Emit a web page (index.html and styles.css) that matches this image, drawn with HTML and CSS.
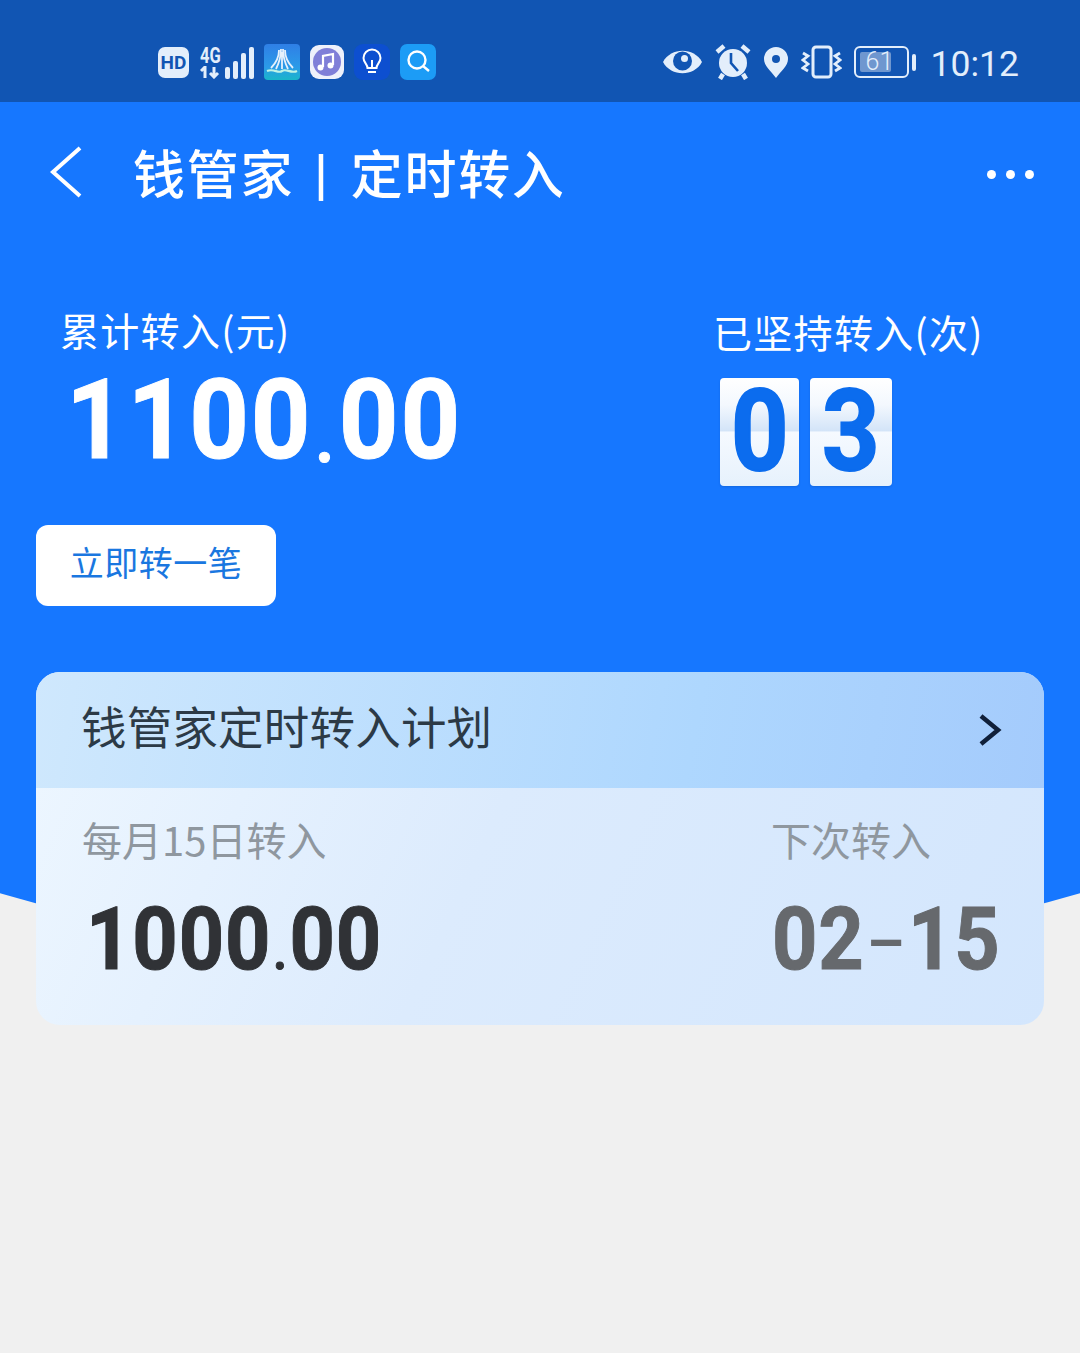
FILE: index.html
```html
<!DOCTYPE html>
<html lang="zh-CN">
    <head>
        <meta charset="UTF-8">
        <title>钱管家 | 定时转入</title>
        <link rel="stylesheet" href="styles.css">
    </head>
    <body>
        <div class="hero_back"></div>
        <div class="page">
            <div class="status_bar">
                <div class="status_left">
                    <span class="hd_badge">HD</span>
                    <div class="signal">
                        <div class="signal_type">
                            <span class="signal_4g">4G</span>
                            <svg class="signal_arrows" width="22" height="13" viewBox="0 0 22 13">
                                <path d="M1 5 L5 1 V12 M14 1 V11 M10 7 L14 11 L18 7" fill="none" stroke="#e3eefb" stroke-width="3"/>
                            </svg>
                        </div>
                        <svg width="29" height="33" viewBox="0 0 29 33">
                            <rect x="0" y="21" width="5" height="12" rx="2" fill="#e3eefb"/>
                            <rect x="8" y="15" width="5" height="18" rx="2" fill="#e3eefb"/>
                            <rect x="16" y="7" width="5" height="26" rx="2" fill="#e3eefb"/>
                            <rect x="24" y="1" width="5" height="32" rx="2" fill="#e3eefb"/>
                        </svg>
                    </div>
                    <svg class="app_icon" width="36" height="36" viewBox="0 0 36 36">
                        <defs>
                            <linearGradient id="tower_bg" x1="0" y1="0" x2="0" y2="1">
                                <stop offset="0" stop-color="#2f7fe6"/>
                                <stop offset="0.65" stop-color="#2b9be8"/>
                                <stop offset="1" stop-color="#19b6c9"/>
                            </linearGradient>
                        </defs>
                        <rect width="36" height="36" rx="4" fill="url(#tower_bg)"/>
                        <path d="M15 6 C15 14 12 19 7 24 M17 5 C17 13 15 19 12 25 M19 5 C19 13 21 19 24 25 M21 6 C21 14 24 19 29 24 M18 8 V25" fill="none" stroke="#e6f1fc" stroke-width="1.800"/>
                        <path d="M3 27 C10 24 14 30 18 27 C22 24 27 30 33 27" fill="none" stroke="#bff3e6" stroke-width="2.200"/>
                    </svg>
                    <svg class="app_icon" width="34" height="34" viewBox="0 0 34 34">
                        <rect width="34" height="34" rx="9" fill="#eef1fb"/>
                        <circle cx="17" cy="17" r="14" fill="#7f7fd8"/>
                        <path d="M13 22 V11 L23 9 V20" fill="none" stroke="#ffffff" stroke-width="2.200"/>
                        <circle cx="10.500" cy="22.500" r="3" fill="#ffffff"/>
                        <circle cx="20.500" cy="20.500" r="3" fill="#ffffff"/>
                    </svg>
                    <svg class="app_icon" width="36" height="36" viewBox="0 0 36 36">
                        <rect width="36" height="36" rx="9" fill="#0d4fd0"/>
                        <path d="M13.500 24 C13.500 20 9.500 18.500 9.500 14 A8.500 8.500 0 0 1 26.500 14 C26.500 18.500 22.500 20 22.500 24 Z" fill="none" stroke="#ffffff" stroke-width="2"/>
                        <path d="M14 28 H22 M18 16 V23" stroke="#ffffff" stroke-width="2"/>
                    </svg>
                    <svg class="app_icon" width="36" height="36" viewBox="0 0 36 36">
                        <rect width="36" height="36" rx="7" fill="#1c9cf6"/>
                        <circle cx="17" cy="16" r="8.500" fill="none" stroke="#ffffff" stroke-width="2.400"/>
                        <path d="M23 22 L29 27" stroke="#ffffff" stroke-width="2.400"/>
                    </svg>
                </div>
                <div class="status_right">
                    <svg width="41" height="28" viewBox="0 0 41 28">
                        <path d="M1 14 C9 -1 32 -1 40 14 C32 29 9 29 1 14 Z" fill="#e3eefb"/>
                        <circle cx="20.500" cy="13" r="9.500" fill="#1155b3"/>
                        <circle cx="22.500" cy="10.500" r="3.500" fill="#e3eefb"/>
                    </svg>
                    <svg width="36" height="36" viewBox="0 0 36 36">
                        <circle cx="18" cy="19" r="14" fill="#e3eefb"/>
                        <path d="M2 8 L9 2 M34 8 L27 2 M8 30 L5 35 M28 30 L31 35" stroke="#e3eefb" stroke-width="4.500"/>
                        <path d="M16 9 V19 L23 27" fill="none" stroke="#1155b3" stroke-width="2.600"/>
                    </svg>
                    <svg width="26" height="32" viewBox="0 0 26 32">
                        <path d="M13 32 C8 25 1 20 1 13 A12 12 0 0 1 25 13 C25 20 18 25 13 32 Z" fill="#e3eefb"/>
                        <circle cx="13" cy="13" r="4" fill="#1155b3"/>
                    </svg>
                    <svg width="41" height="34" viewBox="0 0 41 34">
                        <rect x="12" y="2" width="18" height="30" rx="3" fill="none" stroke="#e3eefb" stroke-width="3"/>
                        <path d="M2 8 L7 11 L2 15 L7 19 L2 23 L7 26 M39 8 L34 11 L39 15 L34 19 L39 23 L34 26" fill="none" stroke="#e3eefb" stroke-width="2.800"/>
                    </svg>
                    <div class="battery">
                        <div class="battery_body">
                            <div class="battery_fill"></div>
                            <span class="battery_level">61</span>
                        </div>
                        <div class="battery_tip"></div>
                    </div>
                    <span class="clock">10:12</span>
                </div>
            </div>

            <div class="nav_bar">
                <svg class="nav_back" width="32" height="52" viewBox="0 0 32 52">
                    <path d="M30 2 L3 26 L30 50" fill="none" stroke="#ffffff" stroke-width="4"/>
                </svg>
                <span class="nav_title">钱管家<span class="nav_sep">|</span>定时转入</span>
                <div class="nav_more"><i></i><i></i><i></i></div>
            </div>

            <div class="summary">
                <div class="summary_total">
                    <div class="summary_label">累计转入(元)</div>
                    <div class="summary_amount">1100<span class="amount_dot">.</span>00</div>
                </div>
                <div class="summary_count">
                    <div class="summary_label">已坚持转入(次)</div>
                    <div class="flip_row">
                        <div class="flip_digit"><span>0</span></div>
                        <div class="flip_digit flip_wide"><span>3</span></div>
                    </div>
                </div>
            </div>

            <button class="transfer_button">立即转一笔</button>

            <div class="plan_card">
                <div class="plan_head">
                    <span class="plan_title">钱管家定时转入计划</span>
                    <svg width="24" height="34" viewBox="0 0 24 34">
                        <path d="M3 3 L20 17 L3 31" fill="none" stroke="#10203a" stroke-width="4.500"/>
                    </svg>
                </div>
                <div class="plan_body">
                    <div class="plan_col">
                        <div class="plan_label">每月15日转入</div>
                        <div class="plan_value">1000<span class="value_dot">.</span>00</div>
                    </div>
                    <div class="plan_col plan_col_next">
                        <div class="plan_label">下次转入</div>
                        <div class="plan_value plan_date">02<span class="date_dash">–</span>15</div>
                    </div>
                </div>
            </div>
        </div>
    </body>
</html>
```

FILE: styles.css
```css
body {
    margin: 0px;
    padding: 0px;
    width: 1080px;
    height: 1353px;
    overflow: hidden;
    position: relative;
    background: #f0f0f0;
    font-family: "Noto Sans CJK SC", "Roboto", sans-serif;
}

/* blue area, its lower edge is a wide arc behind the card */
.hero_back {
    position: absolute;
    top: 0px;
    left: 0px;
    width: 1080px;
    height: 970px;
    background: #1677ff;
    clip-path: circle(1936px at 540px -966px);
}

.page {
    position: relative;
    display: flex;
    flex-direction: column;
}

.status_bar {
    height: 102px;
    padding: 0px 61px 0px 158px;
    background: #1155b3;
    display: flex;
    justify-content: space-between;
    align-items: center;
    box-sizing: border-box;
    color: #e3eefb;
}

.status_left {
    display: flex;
    align-items: center;
    margin-top: 22px;
}
.status_left .app_icon { margin-left: 10px; }

.hd_badge {
    width: 31px;
    height: 31px;
    margin-right: 11px;
    border-radius: 7px;
    background: #e3eefb;
    color: #1155b3;
    font-family: "Roboto", sans-serif;
    font-weight: 700;
    font-size: 19px;
    line-height: 31px;
    text-align: center;
}

.signal {
    display: flex;
    align-items: flex-end;
    gap: 1px;
}

.signal_type {
    width: 24px;
    display: flex;
    flex-direction: column;
}

.signal_4g {
    font-family: "Roboto", sans-serif;
    font-weight: 700;
    font-size: 22px;
    line-height: 20px;
    transform: scaleX(0.75);
    transform-origin: left;
}

.status_right {
    display: flex;
    align-items: center;
    gap: 12px;
    margin-top: 22px;
}

.battery {
    display: flex;
    align-items: center;
    gap: 3px;
}

.battery_body {
    position: relative;
    width: 55px;
    height: 32px;
    border: solid 2px #e3eefb;
    border-radius: 6px;
    box-sizing: border-box;
}

.battery_fill {
    position: absolute;
    top: 4px;
    left: 4px;
    width: 31px;
    height: 20px;
    border-radius: 2px;
    background: #6f97cf;
}

.battery_level {
    position: absolute;
    top: 0px;
    left: 10px;
    font-family: "Roboto", sans-serif;
    font-weight: 300;
    font-size: 25px;
    line-height: 28px;
}

.battery_tip {
    width: 4px;
    height: 17px;
    border-radius: 2px;
    background: #e3eefb;
}

.clock {
    margin: 4px 0px 0px 3px;
    font-family: "Roboto", sans-serif;
    font-weight: 400;
    font-size: 35.500px;
    line-height: 42px;
}

.nav_bar {
    height: 143px;
    padding: 0px 46px 0px 50px;
    display: flex;
    align-items: center;
    color: #ffffff;
    box-sizing: border-box;
}

.nav_back { margin-top: -4px; }

.nav_title {
    margin-left: 51px;
    font-size: 52px;
    font-weight: 500;
    line-height: 60px;
    letter-spacing: 1.700px;
}

.nav_sep {
    margin: 0px 21px 0px 20px;
    font-family: "Roboto", sans-serif;
    font-size: 56px;
    font-weight: 500;
}

.nav_more {
    margin-left: auto;
    margin-top: 2px;
    display: flex;
    gap: 10px;
}
.nav_more i {
    width: 9px;
    height: 9px;
    border-radius: 50%;
    background: #ffffff;
}

.summary {
    height: 280px;
    padding: 59px 0px 0px 60px;
    display: flex;
    color: #ffffff;
    box-sizing: border-box;
}

.summary_total { width: 653px; }

.summary_label {
    font-size: 39px;
    line-height: 50px;
    letter-spacing: 1.300px;
}

.summary_amount {
    margin: 16px 0px 0px 6px;
    font-family: "Roboto", sans-serif;
    font-weight: 700;
    font-size: 112px;
    line-height: 100px;
    letter-spacing: 2px;
    white-space: nowrap;
    -webkit-text-stroke: 1px #ffffff;
    transform: scaleX(0.93);
    transform-origin: left;
}
.amount_dot {
    font-size: 70px;
    line-height: 10px;
    margin: 0px 3px;
    vertical-align: -4px;
}

.summary_count .summary_label { margin-top: 2px; }

.flip_row {
    margin: 22px 0px 0px 7px;
    display: flex;
    gap: 11px;
}

.flip_digit {
    width: 79px;
    height: 108px;
    border-radius: 4px;
    background: linear-gradient(#ffffff 0%, #f3f8fe 25%, #d3e4f8 49%, #f6faff 50%, #e6f1fc 100%);
    box-shadow: 0px 1px 2px rgba(10, 60, 140, 0.25);
    color: #0b6cee;
    font-family: "Roboto", sans-serif;
    font-weight: 700;
    font-size: 114px;
    line-height: 106px;
    text-align: center;
    -webkit-text-stroke: 2px #0b6cee;
}
.flip_digit span {
    display: inline-block;
    transform: scaleX(0.88);
}
.flip_wide { width: 82px; }

.transfer_button {
    width: 240px;
    height: 81px;
    margin: 0px 0px 66px 36px;
    padding: 0px 0px 8px 0px;
    border: none;
    border-radius: 12px;
    background: #ffffff;
    color: #1a77e0;
    font-family: inherit;
    font-size: 34px;
    letter-spacing: 0.5px;
    line-height: 50px;
}

.plan_card {
    width: 1008px;
    height: 353px;
    margin-left: 36px;
    border-radius: 24px;
    overflow: hidden;
    background: linear-gradient(115deg, #eef7ff 0%, #dcebfd 45%, #d3e6fd 100%);
}

.plan_head {
    height: 116px;
    padding: 0px 42px 0px 45px;
    display: flex;
    justify-content: space-between;
    align-items: center;
    background: linear-gradient(100deg, #cfe8fd 0%, #aed7fe 65%, #a4cbfc 100%);
    box-sizing: border-box;
}

.plan_title {
    margin-top: -10px;
    font-size: 45.500px;
    line-height: 60px;
    letter-spacing: 0.2px;
    color: #2c3a46;
}

.plan_body {
    padding: 23px 47px 0px 46px;
    display: flex;
    justify-content: space-between;
}

.plan_col_next { width: 226px; }

.plan_label {
    font-size: 40px;
    line-height: 56px;
    color: #8f979f;
    white-space: nowrap;
}

.plan_value {
    margin: 27px 0px 0px 4px;
    font-family: "Roboto", sans-serif;
    font-weight: 700;
    font-size: 88px;
    line-height: 90px;
    letter-spacing: 1px;
    color: #303236;
    white-space: nowrap;
    -webkit-text-stroke: 1px #303236;
    transform: scaleX(0.9);
    transform-origin: left;
}
.value_dot { font-size: 52px; margin: 0px 2px; }

.plan_date {
    margin-left: 1px;
    color: #66696d;
    -webkit-text-stroke: 1px #66696d;
}
.date_dash {
    margin: 0px 2px;
    font-size: 67px;
    font-weight: 500;
    line-height: 10px;
    vertical-align: 3px;
    -webkit-text-stroke: 0px;
}
```
